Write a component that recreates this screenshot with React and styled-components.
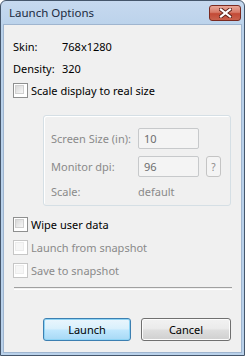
import React from "react"
import styled, { createGlobalStyle } from "styled-components"

const GlobalStyle = createGlobalStyle`
html, body {
  margin: 0;
  padding: 0;
  background: #ffffff;
}
body {
  font-family: "Noto Sans", "Liberation Sans", sans-serif;
  font-size: 11px;
}
`

const Window = styled.div`
width: 245px;
height: 356px;
box-sizing: border-box;
border: 1px solid #45566b;
border-radius: 6px 6px 0 0;
background: linear-gradient(#c6d9ef, #b9d1ea 30px);
padding: 0 2px 2px 2px;
display: flex;
flex-direction: column;
`

const TitleBar = styled.div`
height: 23px;
display: flex;
align-items: center;
justify-content: space-between;
padding-left: 6px;
`

const TitleText = styled.div`
font-size: 11.5px;
color: #1b2a40;
`

const CloseButton = styled.div`
width: 30px;
height: 14px;
margin-top: 1px;
margin-right: 1px;
border: 1px solid #7a2a20;
border-radius: 3px;
background: linear-gradient(#e9a797 0%, #d77a68 45%, #c34a36 55%, #c9624d 100%);
display: flex;
align-items: center;
justify-content: center;
`

const Body = styled.div`
flex: 1;
background: #f0f0f0;
border: 1px solid #9fb5cf;
padding: 10px 9px 0 9px;
display: flex;
flex-direction: column;
color: #000;
`

const InfoRow = styled.div`
height: 22px;
display: flex;
align-items: center;
`

const InfoLabel = styled.span`
flex: none;
width: 49px;
`

const CheckRow = styled.label`
height: ${p => p.h || 23}px;
display: flex;
align-items: center;
gap: 3px;
color: ${p => (p.disabled ? "#8a8a8a" : "#000")};
`

const Box = styled.span`
flex: none;
width: 11px;
height: 11px;
border: 1px solid ${p => (p.disabled ? "#c6c6c6" : "#8e8f8f")};
background: #ffffff;
padding: 1px;
box-sizing: content-box;
display: inline-block;
&::after {
  content: "";
  display: block;
  width: 9px;
  height: 9px;
  border: 1px solid ${p => (p.disabled ? "#ececec" : "#d0d0d0")};
  box-sizing: border-box;
  background: ${p => (p.disabled ? "#f6f6f6" : "linear-gradient(135deg, #d8d8d8, #f7f7f7)")};
}
`

const Group = styled.div`
margin: 14px 1px 0 30px;
height: 91px;
box-sizing: border-box;
border: 1px solid #d5dfe5;
box-shadow: inset 1px 1px 0 #ffffff;
border-radius: 3px;
padding: 12px 0 0 7px;
display: flex;
flex-direction: column;
color: #8a8a8a;
`

const FieldRow = styled.div`
height: ${p => p.h}px;
display: flex;
align-items: ${p => (p.top ? "flex-start" : "center")};
`

const FieldLabel = styled.span`
flex: none;
width: 87px;
align-self: center;
margin-top: ${p => (p.top ? "-7px" : "0")};
`

const Field = styled.div`
width: 61px;
height: 21px;
box-sizing: border-box;
border: 1px solid #c7c9cb;
border-radius: 2px;
background: #f4f4f4;
padding-left: 5px;
display: flex;
align-items: center;
color: #6d6d6d;
`

const HelpButton = styled.div`
width: 15px;
height: 21px;
margin-left: 7px;
box-sizing: border-box;
border: 1px solid #c4c4c4;
border-radius: 3px;
background: #f4f4f4;
display: flex;
align-items: center;
justify-content: center;
font-size: 10px;
color: #8a8a8a;
`

const Separator = styled.div`
margin: 5px 0 0 1px;
height: 1px;
border-top: 1px solid #a0a0a0;
border-bottom: 1px solid #ffffff;
`

const ButtonRow = styled.div`
margin-top: 28px;
display: flex;
justify-content: flex-end;
gap: 10px;
padding-right: 1px;
`

const Button = styled.div`
width: ${p => p.w}px;
height: 23px;
box-sizing: border-box;
border: 1px solid ${p => (p.primary ? "#3c7fb1" : "#707070")};
border-radius: 3px;
background: ${p =>
  p.primary
    ? "linear-gradient(#eaf6fd 0%, #d9f0fc 45%, #bee6fd 55%, #a7d9f5 100%)"
    : "linear-gradient(#f2f2f2 0%, #ebebeb 45%, #dddddd 55%, #cfcfcf 100%)"};
box-shadow: inset 0 0 0 1px ${p => (p.primary ? "#8ed4f5" : "#fcfcfc")};
display: flex;
align-items: center;
justify-content: center;
color: #000;
`

const Check = ({ disabled }) => <Box disabled={disabled} />

const App = () => {
  return (
    <>
      <GlobalStyle />
      <Window>
        <TitleBar>
          <TitleText>Launch Options</TitleText>
          <CloseButton>
            <svg width="13" height="10" viewBox="0 0 13 10">
              <path d="M2 1.5 L11 8.5 M11 1.5 L2 8.5" stroke="#5a1e16" strokeWidth="4" strokeLinecap="square" />
              <path d="M2 1.5 L11 8.5 M11 1.5 L2 8.5" stroke="#ffffff" strokeWidth="2.2" strokeLinecap="square" />
            </svg>
          </CloseButton>
        </TitleBar>
        <Body>
          <InfoRow>
            <InfoLabel>Skin:</InfoLabel>
            <span>768x1280</span>
          </InfoRow>
          <InfoRow>
            <InfoLabel>Density:</InfoLabel>
            <span>320</span>
          </InfoRow>
          <CheckRow h={22}>
            <Check />
            <span>Scale display to real size</span>
          </CheckRow>
          <Group>
            <FieldRow h={28} top>
              <FieldLabel top>Screen Size (in):</FieldLabel>
              <Field>10</Field>
            </FieldRow>
            <FieldRow h={28} top>
              <FieldLabel top>Monitor dpi:</FieldLabel>
              <Field>96</Field>
              <HelpButton>?</HelpButton>
            </FieldRow>
            <FieldRow h={14}>
              <FieldLabel>Scale:</FieldLabel>
              <span>default</span>
            </FieldRow>
          </Group>
          <div style={{ height: 7 }} />
          <CheckRow>
            <Check />
            <span>Wipe user data</span>
          </CheckRow>
          <CheckRow disabled>
            <Check disabled />
            <span>Launch from snapshot</span>
          </CheckRow>
          <CheckRow disabled>
            <Check disabled />
            <span>Save to snapshot</span>
          </CheckRow>
          <Separator />
          <ButtonRow>
            <Button primary w={88}>Launch</Button>
            <Button w={90}>Cancel</Button>
          </ButtonRow>
        </Body>
      </Window>
    </>
  )
}

export default App
